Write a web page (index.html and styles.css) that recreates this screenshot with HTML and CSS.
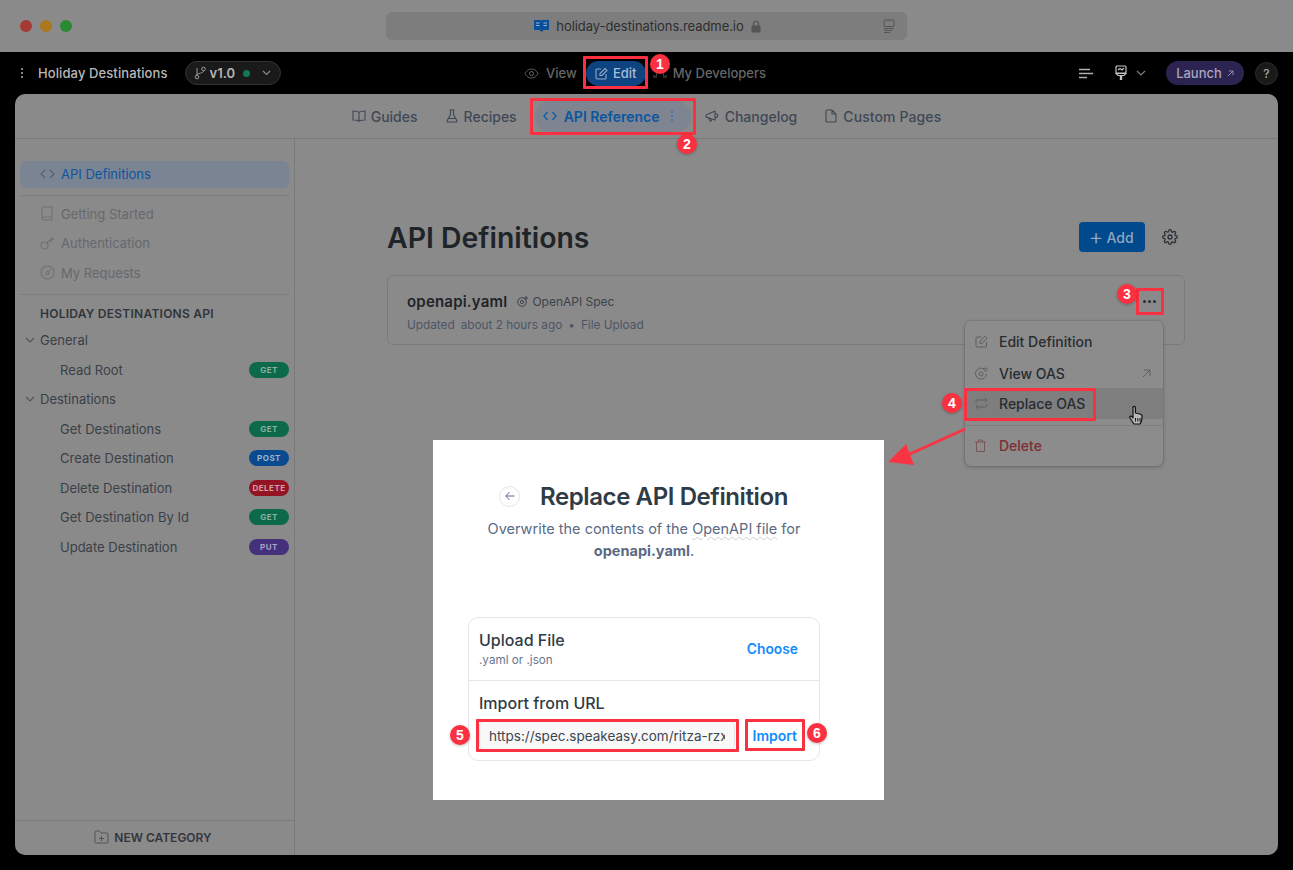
FILE: index.html
```html
<!DOCTYPE html>
<html lang="en">
<head>
<meta charset="utf-8">
<title>Replace API Definition</title>
<link rel="stylesheet" href="styles.css">
</head>
<body>
<div class="window">
  <header class="titlebar">
    <div class="lights"><i class="light red"></i><i class="light amber"></i><i class="light green"></i></div>
    <div class="urlbar">
      <svg class="book" width="17" height="14" viewBox="0 0 17 14"><path d="M1 1h6c.8 0 1.500.3 1.500 1 0-.7.7-1 1.500-1h6v10h-5.500l-2 2-2-2H1z" fill="#0a4f9a"/><path d="M3 4h3.500M3 6.500h3.500M10.500 4H14M10.500 6.500H14" stroke="#9db4cc" stroke-width="1.100"/></svg>
      <span class="url">holiday-destinations.readme.io</span>
      <svg class="lock" width="10" height="13" viewBox="0 0 10 13"><path d="M2.500 6V3.700a2.500 2.500 0 0 1 5 0V6" fill="none" stroke="#555" stroke-width="1.300"/><rect x="0.500" y="5.500" width="9" height="7" rx="1.200" fill="#555"/></svg>
      <svg class="reader" width="12" height="14" viewBox="0 0 12 14"><rect x="1" y="1" width="10" height="6.500" rx="1" fill="none" stroke="#555"/><path d="M1 9.500h10M1 11.500h8M1 13.500h6" stroke="#555"/></svg>
    </div>
  </header>

  <nav class="topbar">
    <div class="top-left">
      <svg width="4" height="12" viewBox="0 0 4 12" fill="#b5b5b5"><circle cx="2" cy="2" r="1"/><circle cx="2" cy="6" r="1"/><circle cx="2" cy="10" r="1"/></svg>
      <span class="project">Holiday Destinations</span>
      <div class="version">
        <svg width="12" height="14" viewBox="0 0 12 14" fill="none" stroke="#9a9a9a" stroke-width="1"><circle cx="3" cy="11" r="1.800"/><circle cx="9.500" cy="3" r="1.800"/><path d="M3 9V2M9.500 5c0 2.500-6.500 2-6.500 4"/></svg>
        <span>v1.0</span><i class="status"></i>
        <svg width="9" height="6" viewBox="0 0 9 6" fill="none" stroke="#8c8c8c" stroke-width="1.100"><path d="M1 1l3.500 3.500L8 1"/></svg>
      </div>
    </div>
    <div class="top-center">
      <span class="mode view">
        <svg width="15" height="11" viewBox="0 0 15 11" fill="none" stroke="#666" stroke-width="1"><path d="M1 5.500C3 2 5 1 7.500 1S12 2 14 5.500C12 9 10 10 7.500 10S3 9 1 5.500z"/><circle cx="7.500" cy="5.500" r="2"/></svg>
        View</span>
      <span class="mode edit">
        <svg width="13" height="13" viewBox="0 0 13 13" fill="none" stroke="#8fa9c4" stroke-width="1.100"><path d="M11 7v4a1 1 0 0 1-1 1H2a1 1 0 0 1-1-1V3a1 1 0 0 1 1-1h4"/><path d="M5 8.500V6.500L10 1.500l2 2-5 5z"/></svg>
        Edit</span>
      <span class="mode devs">
        <svg width="14" height="11" viewBox="0 0 14 11" fill="none" stroke="#555" stroke-width="1"><circle cx="7" cy="3" r="2"/><path d="M3 10V8a3 3 0 0 1 8 0v2M1 10V7M13 10V7"/></svg>
        My Developers</span>
    </div>
    <div class="top-right">
      <svg class="outline-icon" width="14" height="11" viewBox="0 0 14 11" stroke="#b0b0b0" stroke-width="1.500"><path d="M0 1.500h11M0 5.500h14M0 9.500h8"/></svg>
      <svg class="roller" width="12" height="16" viewBox="0 0 12 16" fill="none" stroke="#c4c4c4" stroke-width="1.200"><rect x="1" y="1" width="10" height="7" rx="1"/><path d="M3 5l2-1.500 2 1.500 2-2"/><path d="M1 8.500h10l-2 2H3z"/><path d="M6 10.500v4.500" stroke-width="2.400"/></svg>
      <svg class="chev" width="10" height="6" viewBox="0 0 10 6" fill="none" stroke="#7f7f7f" stroke-width="1.100"><path d="M1 1l4 4 4-4"/></svg>
      <span class="launch">Launch
        <svg width="7" height="7" viewBox="0 0 7 7" fill="none" stroke="#9c97b5" stroke-width=".9"><path d="M1 6l5-5M2 1h4v4"/></svg>
      </span>
      <span class="help">?</span>
    </div>
  </nav>

  <section class="panel">
    <div class="tabs">
      <span class="tab">
        <svg width="14" height="12" viewBox="0 0 14 12" fill="none" stroke="#3f4856" stroke-width="1.100"><path d="M7 2.500C6 1.300 4 1 1 1v9c3 0 5 .2 6 1.300 1-1.100 3-1.300 6-1.300V1c-3 0-5 .3-6 1.500zM7 2.500v8.800"/></svg>
        Guides</span>
      <span class="tab recipes">
        <svg width="12" height="14" viewBox="0 0 12 14" fill="none" stroke="#3f4856" stroke-width="1.100"><path d="M3.500 1h5M4.500 1v4.500L1 12a.8.8 0 0 0 .7 1h8.600a.8.8 0 0 0 .7-1L7.500 5.500V1M3 9.500h6"/></svg>
        Recipes</span>
      <span class="tab active">
        <svg width="14" height="10" viewBox="0 0 14 10" fill="none" stroke="#0d5cab" stroke-width="1.300"><path d="M4.500 1L1 5l3.500 4M9.500 1L13 5l-3.500 4"/></svg>
        <span class="tab-label">API Reference</span>
        <svg class="tab-dots" width="4" height="12" viewBox="0 0 4 12" fill="#2f6fac"><circle cx="2" cy="2" r="1"/><circle cx="2" cy="6" r="1"/><circle cx="2" cy="10" r="1"/></svg>
      </span>
      <span class="tab changelog">
        <svg width="14" height="12" viewBox="0 0 14 12" fill="none" stroke="#3f4856" stroke-width="1.100"><path d="M1 5l9-4v9L1 7zM10 3.500c2 0 2.800 1 2.800 2s-.8 2-2.800 2M3.500 7.500L5 11h1.500L5.500 8"/></svg>
        Changelog</span>
      <span class="tab custom">
        <svg width="12" height="14" viewBox="0 0 12 14" fill="none" stroke="#3f4856" stroke-width="1.100"><path d="M1 2a1 1 0 0 1 1-1h5l4 4v7a1 1 0 0 1-1 1H2a1 1 0 0 1-1-1zM7 1v4h4"/></svg>
        Custom Pages</span>
    </div>

    <div class="main">
      <aside class="sidebar">
        <div class="side-scroll">
          <div class="side-active">
            <svg width="15" height="10" viewBox="0 0 15 10" fill="none" stroke="#52606f" stroke-width="1.100"><path d="M5 1L1 5l4 4M10 1l4 4-4 4"/></svg>
            API Definitions</div>
          <hr class="side-rule first">
          <div class="side-link">
            <svg width="15" height="15" viewBox="0 0 15 15" fill="none" stroke="#6d7175" stroke-width="1.100"><path d="M2 12.500V2a1 1 0 0 1 1-1h9v10H3.500a1.500 1.500 0 0 0 0 3H12v-2"/></svg>
            Getting Started</div>
          <div class="side-link">
            <svg width="15" height="14" viewBox="0 0 15 14" fill="none" stroke="#6d7175" stroke-width="1.100"><circle cx="4.500" cy="9.500" r="3.500"/><path d="M7 7l6-5.500M10 4.500l2 1.500M12 2.500l1.500 1.500"/></svg>
            Authentication</div>
          <div class="side-link">
            <svg width="15" height="15" viewBox="0 0 15 15" fill="none" stroke="#6d7175" stroke-width="1.100"><circle cx="7.500" cy="7.500" r="6.500"/><circle cx="7.500" cy="8" r="1.500"/><path d="M8.500 7l2.500-3"/></svg>
            My Requests</div>
          <hr class="side-rule second">
          <h2 class="side-head">HOLIDAY DESTINATIONS API</h2>
          <div class="side-group">
            <svg width="10" height="6" viewBox="0 0 10 6" fill="none" stroke="#4f565f" stroke-width="1.100"><path d="M1 1l4 4 4-4"/></svg>
            General</div>
          <div class="side-page">Read Root<span class="badge get">GET</span></div>
          <div class="side-group">
            <svg width="10" height="6" viewBox="0 0 10 6" fill="none" stroke="#4f565f" stroke-width="1.100"><path d="M1 1l4 4 4-4"/></svg>
            Destinations</div>
          <div class="side-page">Get Destinations<span class="badge get">GET</span></div>
          <div class="side-page">Create Destination<span class="badge post">POST</span></div>
          <div class="side-page">Delete Destination<span class="badge delete">DELETE</span></div>
          <div class="side-page">Get Destination By Id<span class="badge get">GET</span></div>
          <div class="side-page">Update Destination<span class="badge put">PUT</span></div>
        </div>
        <div class="side-foot">
          <svg width="15" height="14" viewBox="0 0 15 14" fill="none" stroke="#50555c" stroke-width="1"><path d="M1 12V2a1 1 0 0 1 1-1h3.500l1.500 2h6a1 1 0 0 1 1 1v8a1 1 0 0 1-1 1H2a1 1 0 0 1-1-1zM7.500 6v5M5 8.500h5"/></svg>
          NEW CATEGORY</div>
      </aside>

      <main class="content">
        <div class="content-inner">
          <div class="page-head">
            <h1>API Definitions</h1>
            <span class="add"><span class="plus">+</span> Add</span>
            <svg class="gear" width="16" height="16" viewBox="0 0 24 24" fill="none" stroke="#2c3138" stroke-width="2"><circle cx="12" cy="12" r="3"/><path d="M19.400 15a1.700 1.700 0 0 0 .3 1.800l.1.100a2 2 0 1 1-2.900 2.900l-.1-.1a1.700 1.700 0 0 0-2.800 1.200V21a2 2 0 1 1-4 0v-.1a1.700 1.700 0 0 0-2.900-1.200l-.1.100a2 2 0 1 1-2.800-2.900l.1-.1a1.700 1.700 0 0 0-1.200-2.800H3a2 2 0 1 1 0-4h.1a1.700 1.700 0 0 0 1.200-2.900l-.1-.1a2 2 0 1 1 2.900-2.800l.1.100a1.700 1.700 0 0 0 1.800.3H9a1.700 1.700 0 0 0 1-1.500V3a2 2 0 1 1 4 0v.1a1.700 1.700 0 0 0 2.900 1.200l.1-.1a2 2 0 1 1 2.800 2.900l-.1.100a1.700 1.700 0 0 0-.3 1.800V9a1.700 1.700 0 0 0 1.500 1H21a2 2 0 1 1 0 4h-.1a1.700 1.700 0 0 0-1.500 1z"/></svg>
          </div>
          <article class="spec-card">
            <div class="spec-info">
              <div class="spec-title">
                <strong>openapi.yaml</strong>
                <svg width="11" height="11" viewBox="0 0 11 11" fill="none" stroke="#3c424a" stroke-width="1"><circle cx="5" cy="6" r="4.300"/><circle cx="5" cy="6" r="1.600"/><circle cx="9" cy="2" r="1.200"/></svg>
                <span>OpenAPI Spec</span>
              </div>
              <div class="spec-meta"><span>Updated</span><span>about 2 hours ago</span><span>•</span><span>File Upload</span></div>
            </div>
            <span class="more"><i></i><i></i><i></i></span>
          </article>
        </div>
      </main>
    </div>
  </section>
</div>

<div class="menu">
  <div class="menu-item">
    <svg width="13" height="13" viewBox="0 0 13 13" fill="none" stroke="#5c5f63" stroke-width="1"><path d="M11.500 7v4a1 1 0 0 1-1 1H2a1 1 0 0 1-1-1V3a1 1 0 0 1 1-1h4.500"/><path d="M5 8.500V6.300L10 1.200l2 2-5 5.300z"/></svg>
    Edit Definition</div>
  <div class="menu-item">
    <svg width="13" height="13" viewBox="0 0 13 13" fill="none" stroke="#5c5f63" stroke-width="1"><path d="M9 2A5.500 5.500 0 1 0 11.500 7"/><circle cx="6" cy="7" r="2"/><circle cx="10.500" cy="2.500" r="1.500"/></svg>
    View OAS
    <svg class="menu-ext" width="9" height="9" viewBox="0 0 9 9" fill="none" stroke="#5c5f63" stroke-width="1"><path d="M1 8l7-7M2 1h6v6"/></svg>
  </div>
  <div class="menu-item hover">
    <svg width="13" height="13" viewBox="0 0 13 13" fill="none" stroke="#5c5f63" stroke-width="1"><path d="M1 6V4.500A1.500 1.500 0 0 1 2.500 3H12M10 1l2 2-2 2M12 7v1.500A1.500 1.500 0 0 1 10.500 10H1M3 12l-2-2 2-2"/></svg>
    Replace OAS</div>
  <hr class="menu-rule">
  <div class="menu-item danger">
    <svg width="11" height="13" viewBox="0 0 11 13" fill="none" stroke="#7a5557" stroke-width="1"><path d="M0 3h11M3.500 3V1h4v2M1.500 3v9a.5.500 0 0 0 .5.500h7a.5.500 0 0 0 .5-.5V3"/></svg>
    Delete</div>
</div>

<svg class="pointer" width="16" height="20" viewBox="0 0 16 20"><path d="M5 9V2.500a1.200 1.200 0 0 1 2.400 0V8l4.500 1c1.500.4 2.300 1.300 2.100 3l-.5 4-1.500 3H6L2 13c-1-1.500.8-2.500 1.800-1.500L5 13z" fill="#b8b8b8" stroke="#111" stroke-width="1.200" stroke-linejoin="round"/><path d="M7.500 13v3.500M9.800 13v3.500M12 13v3.500" stroke="#111"/></svg>

<section class="shot">
  <div class="shot-head">
    <span class="back"><svg width="10" height="10" viewBox="0 0 10 10" fill="none" stroke="#5a6a85" stroke-width="1"><path d="M9.500 5H.800M4.500 1L.800 5l3.700 4"/></svg></span>
    <h2>Replace API Definition</h2>
  </div>
  <p class="shot-text">Overwrite the contents of the <span class="squiggle">OpenAPI file</span> for <b>openapi.yaml</b>.</p>
  <div class="upload">
    <div class="upload-row">
      <div>
        <div class="upload-title">Upload File</div>
        <div class="upload-sub">.yaml or .json</div>
      </div>
      <span class="link">Choose</span>
    </div>
    <div class="import-row">
      <div class="upload-title">Import from URL</div>
      <div class="import-line">
        <div class="url-input"><span>https://spec.speakeasy.com/ritza-rzx</span></div>
        <span class="link">Import</span>
      </div>
    </div>
  </div>
</section>

<div class="mark m1"></div><div class="mark m2"></div><div class="mark m3"></div>
<div class="mark m4"></div><div class="mark m5"></div><div class="mark m6"></div>
<span class="num n1">1</span><span class="num n2">2</span><span class="num n3">3</span>
<span class="num n4">4</span><span class="num n5">5</span><span class="num n6">6</span>
<svg class="arrow" width="90" height="50" viewBox="0 0 90 50"><path d="M80 4L16 33" stroke="#f93544" stroke-width="3"/><path d="M3 37L21 19l8 21z" fill="#f93544"/></svg>
</body>
</html>
```
FILE: styles.css
```css
* { box-sizing: border-box; }
html, body { margin: 0; padding: 0; }
body {
  width: 1293px;
  height: 870px;
  overflow: hidden;
  position: relative;
  background: #000;
  font-family: Inter, "Liberation Sans", sans-serif;
  color: #2c3036;
}
.window { display: flex; flex-direction: column; height: 870px; }
.titlebar {
  height: 52px;
  flex: none;
  background: #8a8a8a;
  display: flex;
  align-items: center;
  justify-content: center;
  position: relative;
}
.lights { position: absolute; left: 20px; top: 20px; display: flex; gap: 8px; }
.light { width: 12px; height: 12px; border-radius: 50%; display: block; }
.light.red { background: #a53a35; }
.light.amber { background: #a9781f; }
.light.green { background: #2a8a34; }
.urlbar {
  width: 521px;
  height: 28px;
  margin-left: -1px;
  background: #7d7d7d;
  border-radius: 6px;
  display: flex;
  align-items: center;
  justify-content: center;
  position: relative;
  padding-left: 2px;
  font-size: 13px;
  color: #2e2e2e;
}
.url { letter-spacing: -.06px; }
.book { margin-right: 6px; }
.lock { margin-left: 7px; }
.reader { position: absolute; right: 12px; top: 7px; }

.topbar {
  height: 42px;
  flex: none;
  display: grid;
  grid-template-columns: 1fr auto 1fr;
  align-items: center;
  padding: 0 15px 0 20px;
  font-size: 13px;
  font-weight: 500;
  color: #b5b5b5;
}
.top-left { display: flex; align-items: center; }
.project { margin-left: 14px; color: #b9b9b9; letter-spacing: .1px; }
.version {
  margin-left: 17px;
  width: 96px;
  height: 24px;
  border-radius: 12px;
  background: #1a1a1a;
  border: 1px solid #333;
  display: flex;
  align-items: center;
  padding-left: 8px;
  color: #b5b5b5;
}
.version span { margin-left: 4px; font-weight: 600; }
.status { width: 7px; height: 7px; border-radius: 50%; background: #0d7a55; margin: 0 12px 0 8px; }
.top-center { display: flex; align-items: center; margin-left: -8px; }
.mode { display: flex; align-items: center; gap: 6px; color: #666; }
.mode.view svg { margin-right: 1px; }
.mode.edit {
  width: 60px;
  height: 25px;
  border-radius: 13px;
  background: #0d4380;
  color: #a8bdd2;
  justify-content: center;
  gap: 5px;
  margin: 0 7px 0 9px;
}
.top-right { display: flex; align-items: center; justify-content: flex-end; }
.roller { margin-left: 22px; }
.chev { margin-left: 9px; }
.launch {
  margin-left: 20px;
  width: 78px;
  height: 24px;
  border-radius: 12px;
  background: #2b2450;
  color: #a9a5bf;
  display: flex;
  align-items: center;
  justify-content: center;
  gap: 5px;
}
.help {
  margin-left: 11px;
  width: 23px;
  height: 23px;
  border-radius: 50%;
  background: #1a1a1a;
  border: 1px solid #2c2c2c;
  color: #a8a8a8;
  display: flex;
  align-items: center;
  justify-content: center;
  font-size: 12px;
}

.panel {
  margin: 0 15px;
  width: 1263px;
  height: 761px;
  flex: none;
  background: #8a8a8a;
  border-radius: 10px;
  display: flex;
  flex-direction: column;
  overflow: hidden;
}
.tabs {
  height: 45px;
  flex: none;
  border-bottom: 1px solid #7a7a7a;
  display: flex;
  align-items: center;
  justify-content: center;
  gap: 28px;
  font-size: 14px;
  font-weight: 500;
  color: #3f4856;
}
.tab { display: flex; align-items: center; gap: 5px; }
.tab.recipes { gap: 6px; }
.tab.changelog { gap: 6px; }
.tab.custom { gap: 6px; letter-spacing: .1px; }
.tab.active {
  height: 31px;
  width: 156px;
  margin: 0 -14px 0 -10px;
  padding-left: 8px;
  border-radius: 15px;
  background: #7e8590;
  color: #0b56a0;
  font-weight: 600;
  gap: 6px;
}
.tab-label { margin-left: 1px; }
.tab-dots { margin-left: 5px; }
.main { flex: 1; display: flex; min-height: 0; }
.sidebar {
  width: 280px;
  flex: none;
  border-right: 1px solid #7a7a7a;
  display: flex;
  flex-direction: column;
  font-size: 13px;
}
.side-scroll { flex: 1; padding: 22px 5px 0; }
.side-active {
  height: 27px;
  border-radius: 6px;
  background: #7b8493;
  color: #0b56a0;
  display: flex;
  align-items: center;
  gap: 6px;
  padding-left: 20px;
  padding-bottom: 1px;
}
.side-rule { border: 0; border-top: 1px solid #7e7e7e; margin: 0; }
.side-rule.first { margin: 7px 0 3px; }
.side-rule.second { margin: 6px 0 6px; }
.side-link {
  height: 29.500px;
  display: flex;
  align-items: center;
  gap: 6px;
  padding-left: 20px;
  color: #65696e;
}
.side-head {
  margin: 0;
  height: 25px;
  padding-left: 20px;
  padding-top: 1px;
  display: flex;
  align-items: center;
  font-size: 12px;
  font-weight: 600;
  letter-spacing: .25px;
  color: #30353c;
}
.side-group {
  height: 29.500px;
  display: flex;
  align-items: center;
  gap: 5px;
  padding-left: 5px;
  color: #3a4048;
}
.side-page {
  height: 29.500px;
  display: flex;
  align-items: center;
  justify-content: space-between;
  padding-left: 40px;
  color: #3a4048;
}
.badge {
  width: 40px;
  height: 16px;
  border-radius: 8px;
  display: flex;
  align-items: center;
  justify-content: center;
  font-size: 8px;
  font-weight: 700;
  letter-spacing: .5px;
}
.badge.get { background: #0c6a4a; color: #8cb0a2; }
.badge.post { background: #0a4a90; color: #9cb4cf; }
.badge.delete { background: #951424; color: #d3a0a6; }
.badge.put { background: #44307b; color: #aaa2c4; }
.side-foot {
  height: 35px;
  flex: none;
  border-top: 1px solid #7a7a7a;
  display: flex;
  align-items: center;
  justify-content: center;
  gap: 5px;
  padding-bottom: 2px;
  padding-right: 3px;
  font-size: 12px;
  font-weight: 600;
  color: #32363c;
}
.content { flex: 1; min-width: 0; }
.content-inner { width: 798px; margin-left: 92px; padding-top: 80px; }
.page-head { display: flex; align-items: center; height: 36px; }
.page-head h1 {
  margin: 0 auto 0 0;
  font-size: 28.400px;
  font-weight: 600;
  color: #1f2429;
}
.add {
  width: 66px;
  height: 30px;
  border-radius: 4px;
  background: #00498c;
  color: #8ea6c2;
  display: flex;
  align-items: center;
  justify-content: center;
  gap: 3px;
  padding-right: 2px;
  font-size: 14px;
  font-weight: 500;
}
.plus { font-size: 23px; font-weight: 300; line-height: 1; }
.gear { margin: 0 7px 0 17px; }
.spec-card {
  margin-top: 20px;
  height: 70px;
  border: 1px solid #7b7b7b;
  border-radius: 6px;
  padding: 0 20px 0 19px;
  display: flex;
  justify-content: space-between;
  position: relative;
}
.spec-info { padding-top: 15px; }
.spec-title { display: flex; align-items: center; font-size: 12px; color: #3c424a; height: 20px; }
.spec-title strong { font-size: 15px; font-weight: 600; letter-spacing: .2px; color: #1f2429; margin-right: 10px; }
.spec-title span { margin-left: 4px; }
.spec-meta { margin-top: 7px; display: flex; gap: 6px; font-size: 11.800px; color: #4d5665; }
.more {
  margin: 16px 6px 0 0;
  width: 18px;
  height: 18px;
  display: flex;
  align-items: center;
  justify-content: center;
  gap: 2px;
}
.more i { width: 3px; height: 3px; border-radius: 50%; background: #2a2e33; display: block; }

.menu {
  position: absolute;
  left: 965px;
  top: 321px;
  width: 198px;
  height: 145px;
  border-radius: 6px;
  background: #8c8c8c;
  box-shadow: 0 1px 4px rgba(0,0,0,.22), 0 0 0 1px rgba(0,0,0,.06);
  padding-top: 5px;
  font-size: 14px;
  font-weight: 500;
  color: #282c31;
}
.menu-item {
  height: 31px;
  display: flex;
  align-items: center;
  gap: 11px;
  padding-left: 10px;
}
.menu-item:nth-child(2) { padding-top: 1px; }
.menu-item.hover { background: #7e7e7e; }
.menu-item.danger { color: #7e2f36; gap: 13px; height: 32px; margin-top: 3px; }
.menu-ext { margin-left: auto; margin-right: 12px; }
.menu-rule { border: 0; border-top: 1px solid #7e7e7e; margin: 6px 0 0; }
.pointer { position: absolute; left: 1128px; top: 405px; }

.shot {
  position: absolute;
  left: 433px;
  top: 440px;
  width: 451px;
  height: 360px;
  background: #fff;
  padding: 43px 64px 0 35px;
  color: #2f3b46;
}
.shot-head { display: flex; align-items: center; height: 26px; padding-left: 31px; }
.shot-head h2 { margin: 0 0 0 20px; font-size: 24px; font-weight: 600; white-space: nowrap; letter-spacing: -.4px; }
.back {
  width: 21px;
  height: 21px;
  border-radius: 50%;
  border: 1px solid #e0e3e8;
  display: flex;
  align-items: center;
  justify-content: center;
}
.shot-text {
  margin: 9px 0 0;
  text-align: center;
  font-size: 14.500px;
  line-height: 22px;
  color: #5a6a85;
}
.squiggle { text-decoration: underline wavy #c9ced6 1px; text-underline-offset: 2px; }
.shot-text b { font-weight: 700; }
.upload {
  margin-top: 55px;
  width: 352px;
  height: 144px;
  border: 1px solid #e4e6ea;
  border-radius: 10px;
}
.upload-row {
  height: 63px;
  border-bottom: 1px solid #e4e6ea;
  padding: 12px 21px 0 10px;
  display: flex;
  justify-content: space-between;
  align-items: flex-start;
}
.upload-row .link { margin-top: 11px; font-size: 13.800px; }
.upload-title { font-size: 16px; font-weight: 500; line-height: 20px; color: #2f3b46; }
.upload-sub { margin-top: 3px; font-size: 11.700px; line-height: 15px; color: #68778d; }
.link { font-size: 14px; font-weight: 600; color: #118cfd; }
.import-row { padding: 12px 22px 0 10px; }
.import-line { display: flex; align-items: center; justify-content: space-between; margin-top: 8px; }
.url-input {
  width: 256px;
  height: 29px;
  border-radius: 5px;
  background: #f8f8f9;
  box-shadow: inset 0 0 0 1px #e4e6ea;
  padding: 0 10px;
  display: flex;
  align-items: center;
  font-size: 13.500px;
  color: #3a4550;
}
.url-input span { white-space: nowrap; overflow: hidden; width: 236px; display: block; }

.mark { position: absolute; border: 3px solid #fb3040; border-radius: 1px; }
.m1 { left: 583px; top: 56px; width: 65px; height: 33px; }
.m2 { left: 530px; top: 98px; width: 166px; height: 37px; }
.m3 { left: 1136px; top: 288px; width: 28px; height: 27px; }
.m4 { left: 964px; top: 388px; width: 132px; height: 33px; }
.m5 { left: 476px; top: 719px; width: 263px; height: 33px; }
.m6 { left: 745px; top: 719px; width: 60px; height: 32px; }
.num {
  position: absolute;
  width: 20px;
  height: 20px;
  border-radius: 50%;
  background: #fb3040;
  color: #fff;
  font-family: "Liberation Sans", sans-serif;
  font-size: 14px;
  font-weight: 700;
  display: flex;
  align-items: center;
  justify-content: center;
  box-shadow: 0 1px 3px rgba(0,0,0,.25);
}
.n1 { left: 650px; top: 54px; }
.n2 { left: 677px; top: 134px; }
.n3 { left: 1117px; top: 284px; }
.n4 { left: 942px; top: 393px; }
.n5 { left: 450px; top: 725px; }
.n6 { left: 807px; top: 723px; }
.arrow { position: absolute; left: 885px; top: 425px; }
```
